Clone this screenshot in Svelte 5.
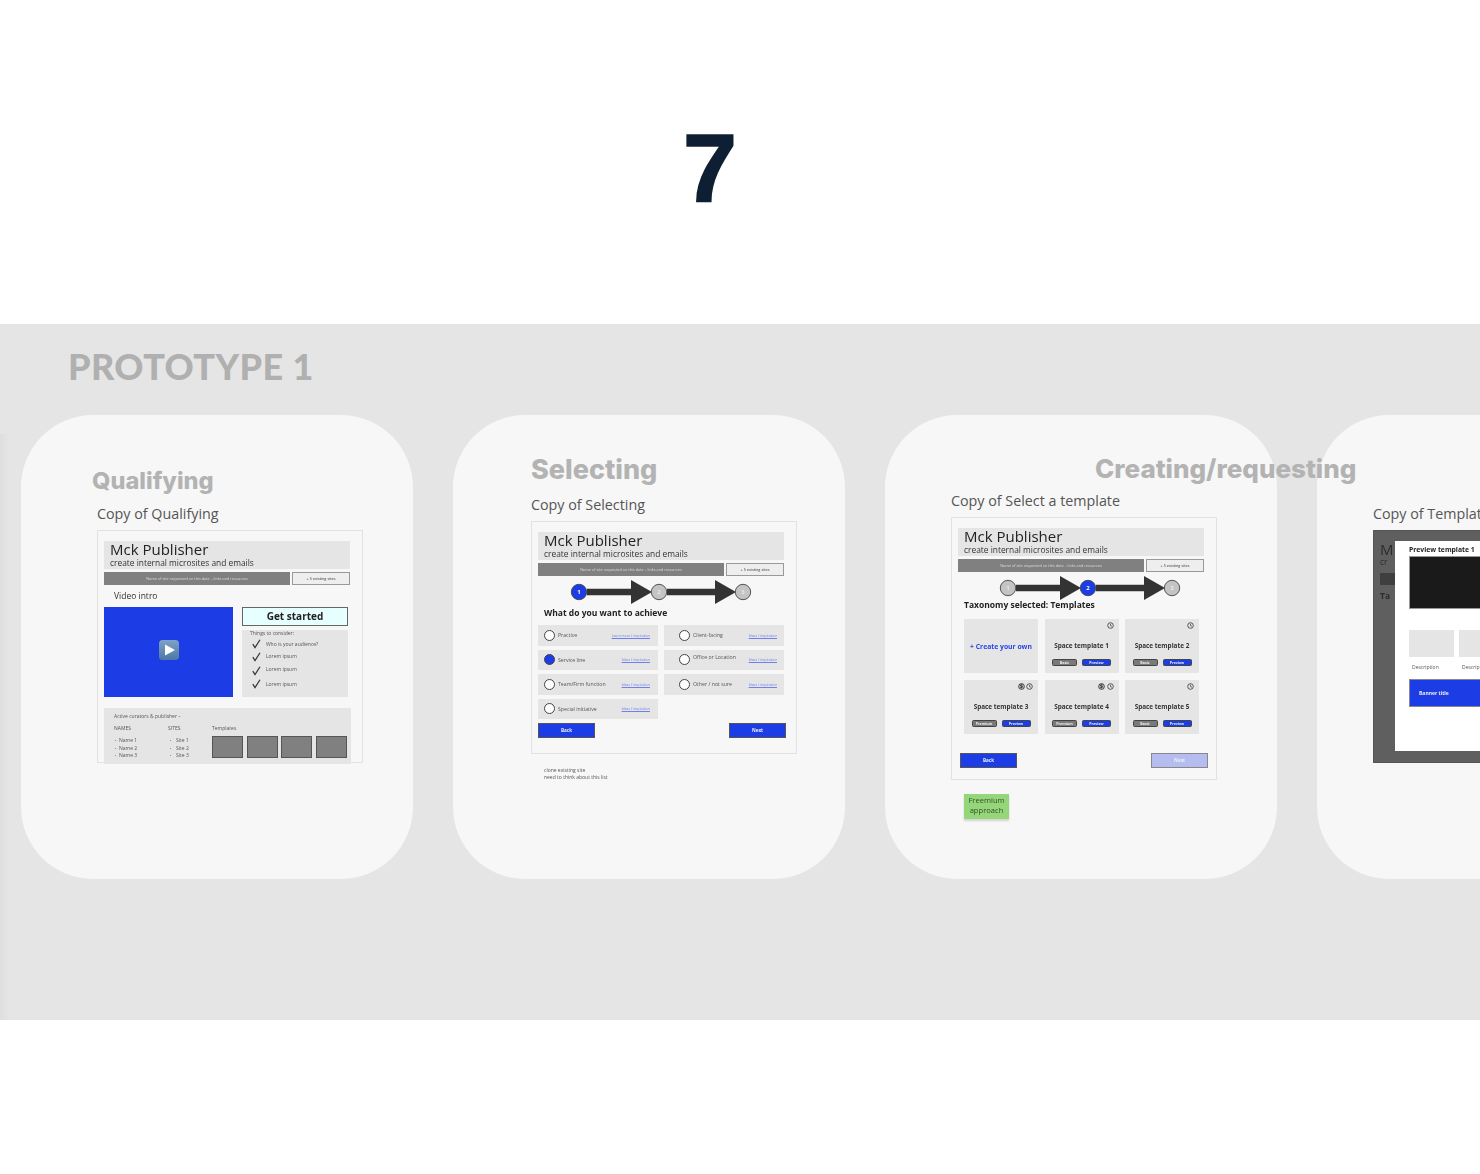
<script>
  const consider = ['Who is your audience?', 'Lorem ipsum', 'Lorem ipsum', 'Lorem ipsum'];
  const options = [
    { label: 'Practice', link: 'Learn more / inspiration' },
    { label: 'Client-facing', link: 'Ideas / inspiration', right: true },
    { label: 'Service line', link: 'Ideas / inspiration', on: true },
    { label: 'Office or Location', link: 'Ideas / inspiration', right: true, up: true },
    { label: 'Team/Firm function', link: 'Ideas / inspiration' },
    { label: 'Other / not sure', link: 'Ideas / inspiration', right: true },
    { label: 'Special initiative', link: 'Ideas / inspiration' }
  ];
  const templates = [
    { name: 'Space template 1', tier: 'Basic' },
    { name: 'Space template 2', tier: 'Basic' },
    { name: 'Space template 3', tier: 'Premium', paid: true },
    { name: 'Space template 4', tier: 'Premium', paid: true },
    { name: 'Space template 5', tier: 'Basic' }
  ];
</script>

{#snippet head()}
  <div class="head">
    <div class="app-name">Mck Publisher</div>
    <div class="app-sub">create internal microsites and emails</div>
  </div>
  <div class="bar-row">
    <div class="bar">Name of site requested on this date – links and resources</div>
    <div class="bar-btn">+ 5 existing sites</div>
  </div>
{/snippet}

{#snippet stepper(x, active)}
  <svg class="stepper" width="252" height="26" viewBox="0 0 252 26">
    {#each [0, 1] as i}
      {@const from = i === 0 ? x + 8 : x + 88}
      {@const to = i === 0 ? x + 72 : x + 156}
      <path fill="#333" d="M{from} 9.7h{to - from - 20}v-8.7l21 12-21 12v-8.7h-{to - from - 20}z" />
    {/each}
    {#each [0, 80, 164] as dx, i}
      <circle cx={x + dx} cy="13" r="7.7" fill={active === i ? '#1c3de6' : '#c4c4c4'} stroke="#444" stroke-width="0.9" />
      <text x={x + dx} y="15" text-anchor="middle" class="step-num" fill={active === i ? '#fff' : '#e8e8e8'}>{i + 1}</text>
    {/each}
  </svg>
{/snippet}

{#snippet clock()}
  <svg width="7" height="7" viewBox="0 0 14 14">
    <circle cx="7" cy="7" r="5.6" fill="none" stroke="#333" stroke-width="1.6" />
    <path d="M7 3.6V7.4L10 8.4" fill="none" stroke="#333" stroke-width="1.4" />
  </svg>
{/snippet}

{#snippet dollar()}
  <svg width="7" height="7" viewBox="0 0 14 14">
    <circle cx="7" cy="7" r="5.8" fill="#b5b5b5" stroke="#333" stroke-width="1.6" />
    <text x="7" y="10.8" text-anchor="middle" class="dollar">$</text>
  </svg>
{/snippet}

<section class="hero"><span class="seven">7</span></section>

<section class="board">
  <h1 class="board-title">PROTOTYPE 1</h1>

  <div class="lane lane-1"></div>
  <div class="lane lane-2"></div>
  <div class="lane lane-3"></div>
  <div class="lane lane-4"></div>

  <h2 class="lane-title t1">Qualifying</h2>
  <h2 class="lane-title t2">Selecting</h2>
  <h2 class="lane-title t3">Creating/requesting</h2>

  <div class="copy c1">Copy of Qualifying</div>
  <div class="copy c2">Copy of Selecting</div>
  <div class="copy c3">Copy of Select a template</div>
  <div class="copy c4">Copy of Template</div>

  <!-- qualifying -->
  <div class="frame f1">
    {@render head()}
    <div class="video-label">Video intro</div>
    <div class="video-row">
      <div class="video">
        <svg width="20" height="20" viewBox="0 0 20 20">
          <defs>
            <linearGradient id="play" x1="0" y1="0" x2="0" y2="1">
              <stop offset="0" stop-color="#7fa2c6" />
              <stop offset="1" stop-color="#4c78a6" />
            </linearGradient>
          </defs>
          <rect width="20" height="20" rx="3.5" fill="url(#play)" />
          <path d="M6 4.5 16 10 6 15.5z" fill="#fff" />
        </svg>
      </div>
      <div class="side">
        <div class="cta">Get started</div>
        <div class="consider">
          <div class="consider-title">Things to consider:</div>
          {#each consider as line}
            <div class="consider-line">
              <svg width="9" height="10" viewBox="0 0 9 10"><path d="M.8 5.2 3 8.6 8 .8" fill="none" stroke="#333" stroke-width="1.2" /></svg>
              <span>{line}</span>
            </div>
          {/each}
        </div>
      </div>
    </div>
    <div class="curators">
      <div class="curators-title">Active curators &amp; publisher –</div>
      <div class="curators-grid">
        <div>
          <div class="col-title">NAMES</div>
          <ul><li>Name 1</li><li>Name 2</li><li>Name 3</li></ul>
        </div>
        <div>
          <div class="col-title">SITES</div>
          <ul class="sites"><li>Site 1</li><li>Site 2</li><li>Site 3</li></ul>
        </div>
        <div>
          <div class="col-title">Templates</div>
          <div class="thumbs">
            {#each [1, 2, 3, 4] as t}<div class="thumb" data-t={t}></div>{/each}
          </div>
        </div>
      </div>
    </div>
  </div>

  <!-- selecting -->
  <div class="frame f2">
    {@render head()}
    {@render stepper(41, 0)}
    <div class="wf-title">What do you want to achieve</div>
    <div class="options">
      {#each options as o}
        <div class="option" class:right={o.right}>
          <span class="radio" class:on={o.on}></span>
          <span class="opt-label" class:up={o.up}>{o.label}</span>
          <span class="opt-link">{o.link}</span>
        </div>
      {/each}
    </div>
    <div class="nav">
      <div class="nav-btn">Back</div>
      <div class="nav-btn">Next</div>
    </div>
  </div>
  <div class="note">clone existing site<br />need to think about this list</div>

  <!-- templates -->
  <div class="frame f3">
    {@render head()}
    {@render stepper(50, 1)}
    <div class="wf-title">Taxonomy selected: Templates</div>
    <div class="templates">
      <div class="tpl own">+ Create your own</div>
      {#each templates as t}
        <div class="tpl">
          <div class="tpl-icons">
            {#if t.paid}{@render dollar()}{/if}
            {@render clock()}
          </div>
          <div class="tpl-name">{t.name}</div>
          <div class="tpl-btns">
            <span class="pill grey">{t.tier}</span>
            <span class="pill blue">Preview</span>
          </div>
        </div>
      {/each}
    </div>
    <div class="nav">
      <div class="nav-btn">Back</div>
      <div class="nav-btn off">Next</div>
    </div>
  </div>
  <div class="sticky">Freemium<br />approach</div>

  <!-- preview modal, runs off the board -->
  <div class="frame f4">
    <div class="dim-m">M</div>
    <div class="dim-cr">cr</div>
    <div class="dim-bar"></div>
    <div class="dim-ta">Ta</div>
    <div class="modal">
      <div class="modal-title">Preview template 1</div>
      <div class="modal-hero"></div>
      <div class="modal-cards">
        <div><div class="modal-card"></div><div class="modal-desc">Description</div></div>
        <div><div class="modal-card"></div><div class="modal-desc">Description</div></div>
      </div>
      <div class="modal-banner">Banner title</div>
    </div>
  </div>
</section>

<section class="foot"></section>

<style>
  :global(body) {
    background: #fff;
    font-family: "Open Sans", sans-serif;
  }
  .hero {
    height: 324px;
    box-sizing: border-box;
    padding: 114px 0 0 683px;
  }
  .seven {
    font: 700 97px/110px "Liberation Sans", sans-serif;
    color: #0f1f33;
    -webkit-text-stroke: 1.6px #0f1f33;
  }
  .foot {
    height: 154px;
  }
  .board {
    position: relative;
    height: 696px;
    background: #e5e5e5;
    overflow: hidden;
  }
  .board::before {
    content: "";
    position: absolute;
    left: 0;
    top: 110px;
    bottom: 0;
    width: 10px;
    background: linear-gradient(90deg, #dedede, #e5e5e5);
  }
  .board-title {
    position: absolute;
    left: 68px;
    top: 20px;
    margin: 0;
    font: 900 36px/44px Lato, sans-serif;
    letter-spacing: 0.4px;
    color: #b0b0b0;
  }
  .lane {
    position: absolute;
    top: 91px;
    width: 392px;
    height: 464px;
    border-radius: 72px;
    background: #f7f7f7;
  }
  .lane-1 { left: 21px; }
  .lane-2 { left: 453px; }
  .lane-3 { left: 885px; }
  .lane-4 { left: 1317px; }

  .lane-title {
    position: absolute;
    margin: 0;
    font-family: Inter, sans-serif;
    font-weight: 800;
    color: #b3b3b3;
    white-space: nowrap;
  }
  .t1 { left: 92px; top: 141px; font-size: 23.6px; line-height: 32px; }
  .t2 { left: 531px; top: 127px; font-size: 27px; line-height: 38px; }
  .t3 { left: 1095px; top: 126px; font-size: 26px; line-height: 38px; }

  .copy {
    position: absolute;
    font-size: 14.3px;
    line-height: 20px;
    color: #555;
    white-space: nowrap;
  }
  .c1 { left: 97px; top: 180px; }
  .c2 { left: 531px; top: 171px; }
  .c3 { left: 951px; top: 167px; }
  .c4 { left: 1373px; top: 180px; }

  .frame {
    position: absolute;
    box-sizing: border-box;
    width: 266px;
    padding: 10px 12px 0 6px;
    border: 1px solid #e2e2e2;
    color: #333;
    filter: blur(0.35px);
  }
  .f1 { left: 97px; top: 206px; height: 233px; }
  .f2 { left: 531px; top: 197px; height: 233px; }
  .f3 { left: 951px; top: 193px; height: 263px; }
  .f4 { left: 1373px; top: 206px; height: 233px; background: #5f5f5f; border-color: #555; padding: 0; }

  .head {
    height: 28px;
    box-sizing: border-box;
    padding-left: 6px;
    background: #e5e5e5;
  }
  .app-name {
    font-size: 15px;
    line-height: 16px;
    color: #222;
  }
  .app-sub {
    margin-top: 1px;
    font-size: 8.4px;
    line-height: 10px;
    color: #333;
  }
  .bar-row {
    display: flex;
    gap: 2px;
    margin-top: 3px;
  }
  .bar {
    width: 186px;
    height: 13px;
    background: #808080;
    color: #ddd;
    font-size: 3.8px;
    line-height: 13px;
    text-align: center;
  }
  .bar-btn {
    width: 58px;
    height: 13px;
    box-sizing: border-box;
    border: 1px solid #999;
    background: #eee;
    font-size: 3.8px;
    line-height: 11px;
    text-align: center;
  }

  .video-label {
    margin: 5px 0 0 10px;
    font-size: 8.5px;
    line-height: 12px;
    height: 17px;
  }
  .video-row {
    display: flex;
    gap: 9px;
  }
  .video {
    display: flex;
    align-items: center;
    justify-content: center;
    width: 129px;
    height: 90px;
    background: #1c3de6;
  }
  .video svg {
    margin-bottom: 5px;
  }
  .side {
    width: 106px;
  }
  .cta {
    box-sizing: border-box;
    height: 19px;
    border: 1px solid #666;
    background: #e6ffff;
    font-size: 10px;
    font-weight: 700;
    line-height: 16px;
    text-align: center;
    color: #222;
  }
  .consider {
    height: 67px;
    box-sizing: border-box;
    margin-top: 4px;
    padding: 0 0 0 8px;
    background: #e5e5e5;
    font-size: 5px;
    color: #555;
  }
  .consider-title {
    line-height: 7px;
  }
  .consider-line {
    display: flex;
    align-items: center;
    gap: 5px;
    height: 13.5px;
    margin-left: 2px;
  }
  .consider-line:nth-child(3) span,
  .consider-line:nth-child(4) span {
    margin-top: -3px;
  }
  .curators {
    height: 56px;
    box-sizing: border-box;
    margin: 11px -1px 0 0;
    padding: 5px 4px 0 10px;
    background: #e5e5e5;
    font-size: 5px;
    color: #555;
  }
  .curators-title {
    line-height: 7px;
    margin-bottom: 5px;
  }
  .curators-grid {
    display: grid;
    grid-template-columns: 54px 44px 1fr;
  }
  .col-title {
    line-height: 7px;
    height: 12px;
  }
  ul {
    margin: 0;
    padding: 0 0 0 1px;
    list-style: none;
    line-height: 7.5px;
  }
  li::before {
    content: "•";
    display: inline-block;
    width: 4px;
    font-size: 3.5px;
  }
  ul.sites {
    padding-left: 2px;
  }
  ul.sites li::before {
    width: 6px;
  }
  .thumbs {
    display: flex;
    justify-content: space-between;
    margin-top: -1px;
  }
  .thumb {
    width: 31px;
    height: 22px;
    box-sizing: border-box;
    background: #808080;
    border: 1px solid #555;
  }

  .stepper {
    display: block;
    margin-top: 3px;
    overflow: visible;
  }
  .step-num {
    font: 700 6px "Open Sans", sans-serif;
  }
  .dollar {
    font: 700 10px "Open Sans", sans-serif;
    fill: #222;
  }
  .wf-title {
    margin: 2px 0 0 6px;
    font-size: 8.5px;
    font-weight: 700;
    line-height: 12px;
    color: #222;
  }
  .f3 .wf-title {
    margin-top: -2px;
  }
  .options {
    display: grid;
    grid-template-columns: 120px 120px;
    grid-auto-rows: 20.5px;
    gap: 4px 6px;
    margin-top: 6px;
  }
  .option {
    display: flex;
    align-items: center;
    padding: 0 8px 0 6px;
    background: #e5e5e5;
    font-size: 5.2px;
    color: #555;
  }
  .option.right {
    padding-left: 15px;
  }
  .radio {
    width: 11px;
    height: 11px;
    box-sizing: border-box;
    margin-right: 3px;
    border: 1.2px solid #444;
    border-radius: 50%;
    background: #fff;
  }
  .radio.on {
    background: #1c3de6;
  }
  .opt-label.up {
    margin-top: -6px;
  }
  .opt-link {
    margin-left: auto;
    font-size: 3.4px;
    color: #6f80ea;
    text-decoration: underline;
  }
  .right .opt-link {
    margin-right: -1px;
  }
  .nav {
    display: flex;
    justify-content: space-between;
    margin: 4px -2px 0 0;
  }
  .f3 .nav {
    margin: 19px -4px 0 2px;
  }
  .nav-btn {
    box-sizing: border-box;
    width: 57px;
    height: 15px;
    border: 1px solid #555;
    background: #1c3de6;
    color: #eee;
    font-size: 4.6px;
    font-weight: 700;
    line-height: 13px;
    text-align: center;
  }
  .nav-btn.off {
    background: #b5bdf0;
    border-color: #888;
  }
  .note {
    position: absolute;
    left: 544px;
    top: 443px;
    font-size: 5px;
    line-height: 6.8px;
    color: #555;
    filter: blur(0.35px);
  }
  .templates {
    display: grid;
    grid-template-columns: repeat(3, 74px);
    grid-auto-rows: 54px;
    gap: 7px 6.5px;
    margin: 8px 0 0 6px;
  }
  .tpl {
    display: flex;
    flex-direction: column;
    align-items: center;
    background: #e5e5e5;
  }
  .own {
    justify-content: center;
    font-size: 6.8px;
    font-weight: 700;
    color: #2a46e6;
  }
  .tpl-icons {
    display: flex;
    gap: 1.5px;
    align-self: flex-end;
    height: 7px;
    margin: 3px 5px 0 0;
  }
  .tpl-name {
    margin-top: 12px;
    font-size: 6.4px;
    font-weight: 700;
    line-height: 9px;
    color: #333;
  }
  .tpl-btns {
    display: flex;
    gap: 5px;
    margin-top: 9px;
  }
  .pill {
    box-sizing: border-box;
    height: 7px;
    border: 0.7px solid #444;
    border-radius: 1.5px;
    color: #eee;
    font-size: 3.6px;
    font-weight: 700;
    line-height: 5px;
    text-align: center;
  }
  .grey {
    width: 25px;
    background: #7a7a7a;
  }
  .blue {
    width: 29px;
    background: #1c3de6;
  }
  .sticky {
    position: absolute;
    left: 964px;
    top: 470px;
    width: 45px;
    height: 24px;
    background: #96d67a;
    box-shadow: 0 2px 2px rgba(0, 0, 0, 0.15);
    font-size: 7.6px;
    line-height: 10px;
    padding-top: 1px;
    text-align: center;
    color: #2f4f28;
    filter: blur(0.35px);
  }

  .dim-m,
  .dim-cr,
  .dim-ta {
    position: absolute;
    left: 6px;
    color: #2c2c2c;
  }
  .dim-m { top: 8px; font-size: 15px; }
  .dim-cr { top: 25px; font-size: 8.4px; }
  .dim-ta { top: 59px; font-size: 8.5px; font-weight: 700; }
  .dim-bar {
    position: absolute;
    left: 6px;
    top: 42px;
    width: 20px;
    height: 12px;
    background: #3f3f3f;
  }
  .modal {
    position: absolute;
    left: 21px;
    top: 10px;
    width: 224px;
    height: 210px;
    box-sizing: border-box;
    padding: 4px 0 0 14px;
    background: #fff;
  }
  .modal-title {
    font-size: 6.8px;
    font-weight: 700;
    line-height: 9px;
    color: #222;
  }
  .modal-hero {
    width: 196px;
    height: 53px;
    margin-top: 2px;
    box-sizing: border-box;
    background: #1a1a1a;
    border: 1px solid #999;
  }
  .modal-cards {
    display: flex;
    gap: 5px;
    margin-top: 21px;
  }
  .modal-card {
    width: 45px;
    height: 27px;
    background: #e5e5e5;
  }
  .modal-desc {
    margin: 7px 0 0 3px;
    font-size: 5px;
    line-height: 7px;
    color: #555;
  }
  .modal-banner {
    width: 196px;
    height: 28px;
    box-sizing: border-box;
    margin-top: 8px;
    padding-left: 9px;
    border: 1px solid #888;
    background: #1c3de6;
    color: #eee;
    font-size: 5px;
    font-weight: 700;
    line-height: 26px;
  }
</style>
